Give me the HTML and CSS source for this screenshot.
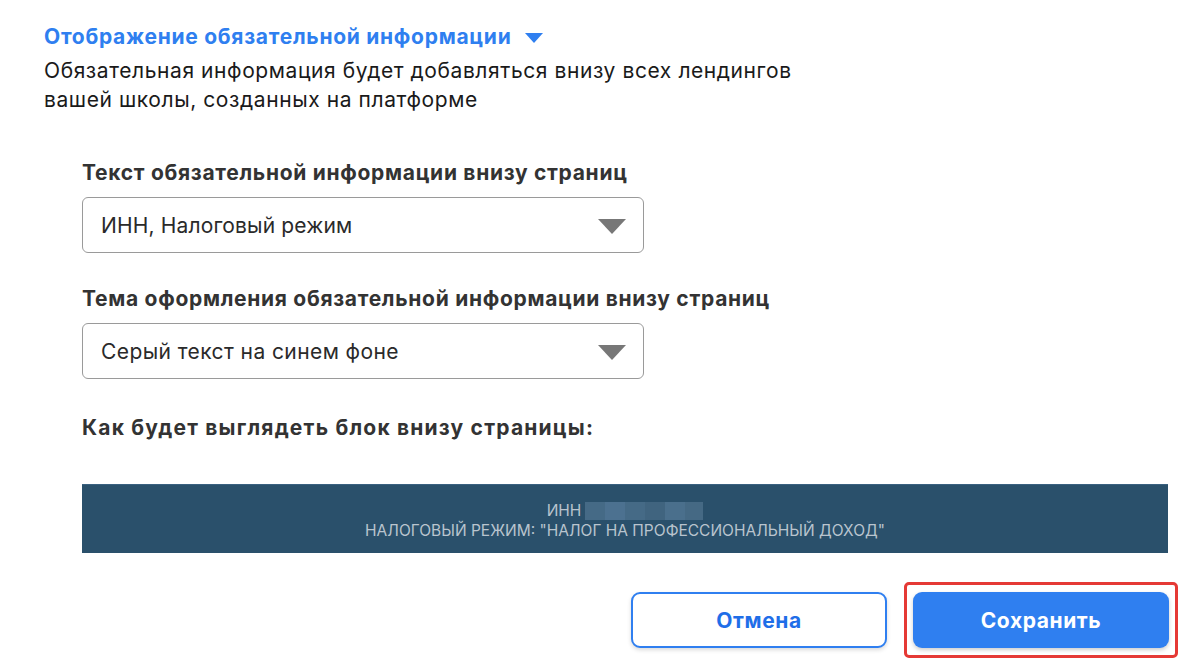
FILE: index.html
```html
<!DOCTYPE html>
<html lang="ru">
<head>
<meta charset="utf-8">
<link rel="stylesheet" href="styles.css">
</head>
<body>
<div class="page">
  <div class="head">
    <div class="title">Отображение обязательной информации <span class="caret"></span></div>
    <p class="desc">Обязательная информация будет добавляться внизу всех лендингов<br>вашей школы, созданных на платформе</p>
  </div>
  <div class="form">
    <div class="field">
      <div class="label l1">Текст обязательной информации внизу страниц</div>
      <div class="select"><span class="s1">ИНН, Налоговый режим</span><span class="arrow"></span></div>
    </div>
    <div class="field">
      <div class="label l2">Тема оформления обязательной информации внизу страниц</div>
      <div class="select"><span class="s2">Серый текст на синем фоне</span><span class="arrow"></span></div>
    </div>
    <div class="label l3 preview-label">Как будет выглядеть блок внизу страницы:</div>
    <div class="preview">
      <div class="line">ИНН <span class="blur"><i></i><i></i><i></i><i></i><i></i><i></i></span></div>
      <div class="line">НАЛОГОВЫЙ РЕЖИМ: "НАЛОГ НА ПРОФЕССИОНАЛЬНЫЙ ДОХОД"</div>
    </div>
    <div class="actions">
      <button class="btn btn-outline">Отмена</button>
      <div class="highlight"><button class="btn btn-primary">Сохранить</button></div>
    </div>
  </div>
</div>
</body>
</html>
```
FILE: styles.css
```css
* { box-sizing: border-box; }
html, body { margin: 0; padding: 0; background: #fff; }
body { font-family: Inter, "Noto Sans", sans-serif; color: #1f1f1f; width: 1199px; height: 670px; overflow: hidden; }
.page { padding: 22px 0 0 44px; }
.title { color: #2f7ff0; font-size: 21px; font-weight: 700; line-height: 29px; display: flex; align-items: center; letter-spacing: 0.72px; }
.caret { display: inline-block; width: 0; height: 0; border-left: 9px solid transparent; border-right: 9px solid transparent; border-top: 10px solid #2f7ff0; margin-left: 14px; margin-top: 2px; }
.desc { margin: 5px 0 0; font-size: 21px; line-height: 29px; color: #1a1a1a; letter-spacing: 0.58px; }
.form { margin-left: 38px; margin-top: 46px; width: 1086px; }
.field { margin-bottom: 33px; }
.label { font-size: 21px; font-weight: 700; color: #333; line-height: 26px; }
.l1 { letter-spacing: 0.7px; }
.l2 { letter-spacing: 0.7px; }
.l3 { letter-spacing: 1.2px; }
.select { margin-top: 11px; width: 562px; height: 56px; border: 1px solid #9a9a9a; border-radius: 6px; display: flex; align-items: center; justify-content: space-between; padding: 0 17px 0 18px; font-size: 21px; color: #2a2a2a; }
.s1 { letter-spacing: 0.15px; }
.s2 { letter-spacing: 0.42px; }
.arrow { width: 0; height: 0; border-left: 14px solid transparent; border-right: 14px solid transparent; border-top: 15px solid #777; margin-top: 2px; }
.preview-label { margin-top: 36px; }
.preview { margin-top: 43px; height: 69px; padding-top: 3px; background: #2a506b; border-top: 1px solid #3a6180; display: flex; flex-direction: column; align-items: center; justify-content: center; color: #b9c4ce; font-size: 15.5px; line-height: 20px; }
.line { display: flex; align-items: center; }
.blur { display: inline-flex; margin-left: 4px; height: 18px; }
.blur i { display: block; width: 20px; height: 18px; background: #456a86; }
.blur i:nth-child(2) { background: #4c7190; }
.blur i:nth-child(4) { background: #40647f; }
.blur i:nth-child(5) { background: #4a6f8c; }
.blur i:nth-child(6) { width: 18px; background: #456984; }
.actions { display: flex; justify-content: flex-end; align-items: center; margin-top: 29px; margin-right: -10px; gap: 17px; }
.btn { font-family: Inter, "Noto Sans", sans-serif; font-size: 21px; font-weight: 700; letter-spacing: 0.6px; width: 256px; height: 56px; border-radius: 9px; cursor: pointer; }
.btn-outline { background: #fff; color: #1f6ee8; border: 2px solid #2f7ff0; box-shadow: 0 2px 4px rgba(0,0,0,0.15); }
.highlight { border: 3px solid #e53935; border-radius: 5px; padding: 7px 6px; }
.btn-primary { display: block; background: #2f7ff0; color: #fff; border: none; box-shadow: 0 2px 4px rgba(0,0,0,0.2); }
```
